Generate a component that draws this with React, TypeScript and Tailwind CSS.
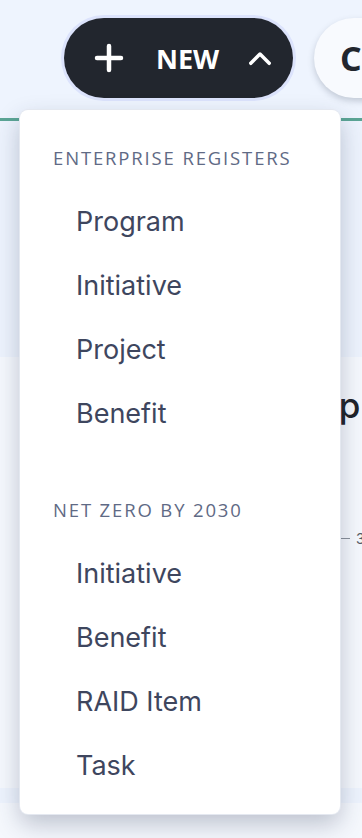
import React from 'react'

const SECTIONS = [
  { title: 'Enterprise Registers', items: ['Program', 'Initiative', 'Project', 'Benefit'] },
  { title: 'Net Zero by 2030', items: ['Initiative', 'Benefit', 'RAID Item', 'Task'] },
]

const PlusIcon = () => (
  <svg width="30" height="30" viewBox="0 0 30 30" fill="none">
    <path d="M15 3v24M3 15h24" stroke="white" strokeWidth="4.5" strokeLinecap="round" />
  </svg>
)

const ChevronUp = () => (
  <svg width="24" height="18" viewBox="0 0 24 18" fill="none">
    <polyline
      points="2.8,14.3 12,5 21.2,14.3"
      stroke="white"
      strokeWidth="3.5"
      strokeLinecap="round"
      strokeLinejoin="round"
    />
  </svg>
)

const NewMenu: React.FC = () => {
  return (
    <div className="absolute left-[20px] top-[110px] flex w-[320px] flex-col rounded-[8px] bg-white pb-[16px] pt-[32px] shadow-[0_10px_24px_rgba(40,52,84,0.28)] ring-1 ring-[#e4e8f0]">
      {SECTIONS.map((section, i) => (
        <div key={section.title} className={i > 0 ? 'mt-[48px] flex flex-col' : 'flex flex-col'}>
          <div className="flex h-[32px] items-center pl-[33px] font-['Open_Sans',sans-serif] text-[18.5px] uppercase tracking-[0.1em] text-[#5f6a85]">
            {section.title}
          </div>
          <div className="mt-[16px] flex flex-col">
            {section.items.map(item => (
              <div
                key={item}
                className="flex h-[64px] items-center pl-[56px] font-['Inter',sans-serif] text-[27px] text-[#3e465e]"
              >
                {item}
              </div>
            ))}
          </div>
        </div>
      ))}
    </div>
  )
}

export default function App() {
  return (
    <div className="relative h-[838px] w-[362px] overflow-hidden bg-[#eef4fe] font-['Inter',sans-serif]">
      <header className="flex h-[118px] items-start gap-[21px] pl-[64px] pt-[18px]">
        <button
          type="button"
          className="flex h-[80px] w-[229px] shrink-0 items-center rounded-full bg-[#22262e] pl-[30px] ring-[3px] ring-[#dce3fc]"
        >
          <PlusIcon />
          <span className="ml-[32px] font-['Open_Sans',sans-serif] text-[27px] font-bold leading-none text-white">
            NEW
          </span>
          <span className="ml-[29px]">
            <ChevronUp />
          </span>
        </button>
        <button
          type="button"
          className="flex h-[80px] w-[140px] shrink-0 items-center rounded-full bg-[#f8fafe] pl-[26px] shadow-[0_3px_6px_rgba(60,70,90,0.25)]"
        >
          <span className="font-['Open_Sans',sans-serif] text-[34px] font-bold leading-none text-[#22262e]">
            Columns
          </span>
        </button>
      </header>
      <div className="h-[3px] bg-[#5ba595]" />
      <div className="h-[236px] bg-[#edf3fd]" />
      <section className="flex h-[431px] flex-col bg-[#f5f8fd] pl-[312px] pt-[24px]">
        <h2 className="whitespace-nowrap text-[35px] font-medium leading-[48px] text-[#1f2329]">
          Opportunities
        </h2>
        <div className="mt-[99px] flex items-center gap-[6px] whitespace-nowrap text-[14px] text-[#555b66]">
          <span className="h-px w-[38px] shrink-0 bg-[#8a909a]" />
          <span>30 days</span>
        </div>
      </section>
      <div className="h-[15px] bg-[#edf3fd]" />
      <div className="h-[35px] bg-[#f5f8fd]" />
      <NewMenu />
    </div>
  )
}
